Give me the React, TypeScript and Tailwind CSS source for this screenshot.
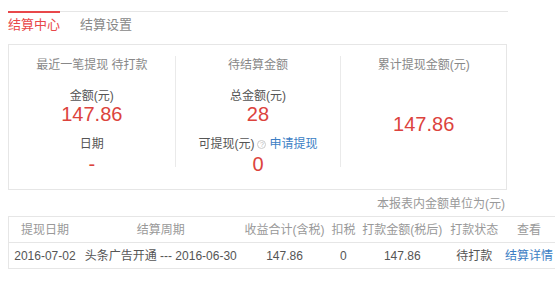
import React from "react";

const font = { fontFamily: '"Liberation Sans","Noto Sans CJK SC",sans-serif' };

export default function App() {
  return (
    <div className="w-[555px] h-[288px] overflow-hidden bg-white pl-2 pt-[11px]" style={font}>
      {/* tabs */}
      <div className="w-[500px] border-t border-[#e6e6e6] flex gap-5 text-[13px] leading-4">
        <div className="-mt-px border-t-2 border-[#e8474a] pt-[4px] text-[#e8474a]">结算中心</div>
        <div className="pt-[5px] text-[#888]">结算设置</div>
      </div>

      {/* summary box */}
      <div className="mt-[11px] w-[499px] h-[146px] border border-[#e6e6e6] grid grid-cols-3 text-[12px] leading-4 text-center">
        <div className="mt-[11px] h-[111px] pt-px">
          <div className="text-[#888]">最近一笔提现 待打款</div>
          <div className="mt-[15px] text-[#555]">金额(元)</div>
          <div className="text-[20px] leading-5 text-[#dc433d]">147.86</div>
          <div className="mt-[12px] text-[#555]">日期</div>
          <div className="mt-[2px] text-[20px] leading-5 text-[#dc433d]">-</div>
        </div>
        <div className="mt-[11px] h-[111px] pt-px border-l border-[#eaeaea]">
          <div className="text-[#888]">待结算金额</div>
          <div className="mt-[15px] text-[#555]">总金额(元)</div>
          <div className="text-[20px] leading-5 text-[#dc433d]">28</div>
          <div className="mt-[12px] text-[#555] flex items-center justify-center">
            <span>可提现(元)</span>
            <span className="mx-[3px] inline-flex items-center justify-center w-[9px] h-[9px] rounded-full border border-[#ccc] text-[7px] leading-none text-[#bbb]">?</span>
            <span className="text-[#3b7ec4]">申请提现</span>
          </div>
          <div className="mt-[2px] text-[20px] leading-5 text-[#dc433d]">0</div>
        </div>
        <div className="mt-[11px] h-[111px] pt-px border-l border-[#eaeaea]">
          <div className="text-[#888]">累计提现金额(元)</div>
          <div className="mt-[41px] text-[20px] leading-5 text-[#dc433d]">147.86</div>
        </div>
      </div>

      <div className="w-[499px] mt-[6px] text-right pr-[2px] text-[12px] leading-4 text-[#999]">本报表内金额单位为(元)</div>

      {/* table */}
      <div className="mt-[4px] w-[548px] border-l border-t border-[#e6e6e6] text-[12px] leading-4">
        <div className="flex h-[26px] items-center border-b border-[#e6e6e6] text-[#999]">
          <div className="w-[72px] text-center">提现日期</div>
          <div className="w-[160px] text-center">结算周期</div>
          <div className="w-[88px] text-center">收益合计(含税)</div>
          <div className="w-[30px] text-center">扣税</div>
          <div className="w-[88px] text-center">打款金额(税后)</div>
          <div className="w-[56px] text-center">打款状态</div>
          <div className="w-[54px] text-center">查看</div>
        </div>
        <div className="flex h-[26px] items-center border-b border-[#e6e6e6] text-[#555]">
          <div className="w-[72px] text-center whitespace-nowrap">2016-07-02</div>
          <div className="w-[160px] text-center whitespace-nowrap">头条广告开通 --- 2016-06-30</div>
          <div className="w-[88px] text-center">147.86</div>
          <div className="w-[30px] text-center">0</div>
          <div className="w-[88px] text-center">147.86</div>
          <div className="w-[56px] text-center">待打款</div>
          <div className="w-[54px] text-center text-[#3b7ec4] whitespace-nowrap">结算详情</div>
        </div>
      </div>
    </div>
  );
}
